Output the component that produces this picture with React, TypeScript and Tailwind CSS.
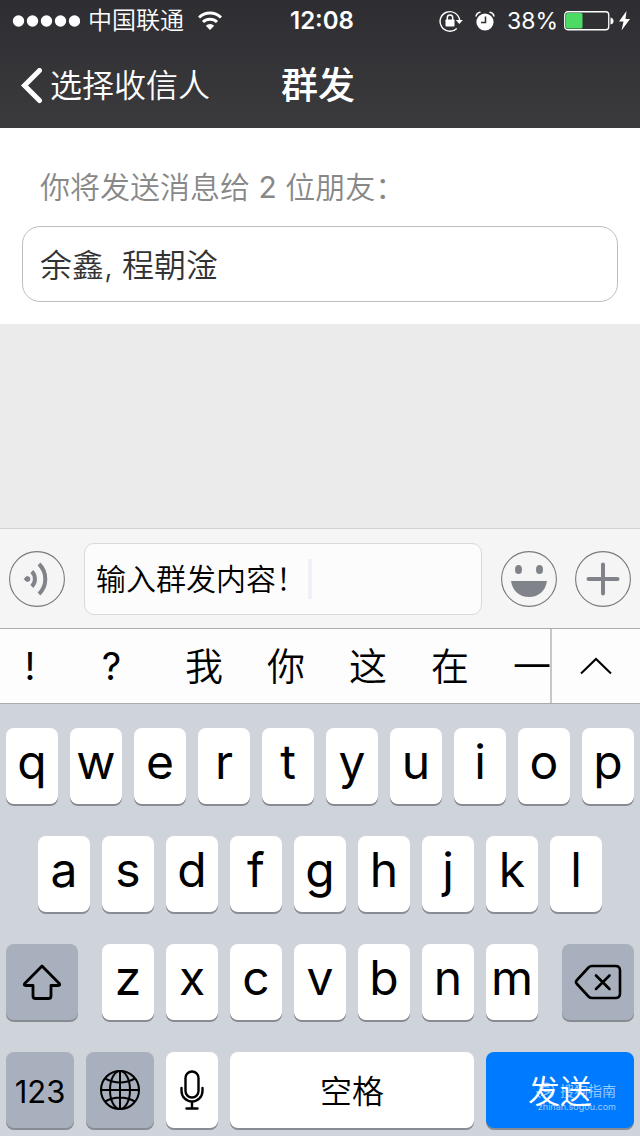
import type { ReactNode } from 'react';

function Carrier() {
  return (
    <div className="flex items-center">
      <svg className="h-3 w-17" viewBox="0 0 68 12" fill="currentColor" aria-hidden="true">
        <circle cx="6.500" cy="6" r="5.700" />
        <circle cx="20.500" cy="6" r="5.700" />
        <circle cx="34.500" cy="6" r="5.700" />
        <circle cx="48.500" cy="6" r="5.700" />
        <circle cx="62.500" cy="6" r="5.700" />
      </svg>
      <span className="ml-2 text-2xl leading-8 font-[350]">中国联通</span>
      <svg className="ml-3.5 h-5 w-6" viewBox="0 0 24 20" aria-hidden="true">
        <g fill="none" stroke="currentColor" strokeWidth="3">
          <path d="M1 6.500a15.800 15.800 0 0 1 22 0" />
          <path d="M5 11a10 10 0 0 1 14 0" />
        </g>
        <path d="M12 19 7.800 14.800a6 6 0 0 1 8.400 0z" fill="currentColor" />
      </svg>
    </div>
  );
}

function Power() {
  return (
    <div className="flex items-center justify-end">
      <svg className="h-6 w-6" viewBox="0 0 24 24" aria-hidden="true">
        <path d="M17.800 19.400A9.800 9.800 0 1 1 20.600 11" fill="none" stroke="currentColor" strokeWidth="1.400" />
        <path d="M16.800 11h7l-3.500 4z" fill="currentColor" />
        <rect x="6.500" y="10.500" width="9" height="7" rx="0.800" fill="currentColor" />
        <path d="M8.300 11V8.800a2.700 2.700 0 0 1 5.400 0V11" fill="none" stroke="currentColor" strokeWidth="1.500" />
      </svg>
      <svg className="ml-3 h-5 w-5" viewBox="0 0 20 20" aria-hidden="true">
        <circle cx="10" cy="11" r="8.600" fill="currentColor" />
        <path d="M1 5.500A5 5 0 0 1 5.500 1.200M19 5.500a5 5 0 0 0-4.500-4.300" fill="none" stroke="currentColor" strokeWidth="1.600" />
        <path d="M10.500 5.500V11.500H6" fill="none" stroke="#2f2e33" strokeWidth="1.500" />
      </svg>
      <span className="ml-3 text-[23px] leading-8">38%</span>
      <svg className="ml-1.5 h-5 w-[68px]" viewBox="0 0 68 20" aria-hidden="true">
        <rect x="0.750" y="0.750" width="44" height="18" rx="3" fill="none" stroke="currentColor" strokeWidth="1.300" />
        <rect x="2" y="2" width="16.500" height="15.500" rx="1.500" fill="#4cd964" />
        <path d="M46.500 6.500q3 .5 3 3.500t-3 3.500z" fill="currentColor" />
        <path d="M62.500 0 55 10.500h4.500L57.500 19.500 66 8h-4.500z" fill="currentColor" />
      </svg>
    </div>
  );
}

type KeyProps = { label: string; className: string; children: ReactNode };

function Key({ label, className, children }: KeyProps) {
  return (
    <button
      type="button"
      aria-label={label}
      className={`flex h-[76px] items-center justify-center rounded-lg shadow-[0_2px_0_#878b92] ${className}`}
    >
      {children}
    </button>
  );
}

function Letters({ keys }: { keys: string }) {
  return (
    <>
      {keys.split('').map((k) => (
        <Key key={k} label={k} className="min-w-0 flex-1 bg-white pb-2 text-5xl">
          {k}
        </Key>
      ))}
    </>
  );
}

function RoundButton({ label, children }: { label: string; children: ReactNode }) {
  return (
    <button type="button" aria-label={label} className="shrink-0 text-[#808389]">
      <svg className="h-14 w-14" viewBox="0 0 56 56" aria-hidden="true">
        <circle cx="28" cy="28" r="27.400" fill="none" stroke="#77797d" strokeWidth="1.100" />
        {children}
      </svg>
    </button>
  );
}

const candidates = ['我', '你', '这', '在', '一'];

export default function App() {
  return (
    <div className="flex min-h-screen flex-col bg-[#ebebeb] font-['Inter','Noto_Sans_CJK_SC',sans-serif] text-black">
      <header className="bg-linear-to-b from-[#2e2d32] to-[#3b3b3d] text-white">
        <div className="grid h-10 grid-cols-[1fr_auto_1fr] items-center pt-0.5 pr-2 pl-3">
          <Carrier />
          <time className="text-2xl leading-8 font-semibold">12:08</time>
          <Power />
        </div>
        <nav className="grid h-22 grid-cols-[1fr_auto_1fr] items-center pt-1 pr-6 pl-5">
          <a href="#recipients" className="flex items-center gap-2 text-[32px] leading-10 font-[350]">
            <svg className="h-9 w-[22px]" viewBox="0 0 22 36" fill="none" stroke="currentColor" strokeWidth="5" strokeLinecap="round" aria-hidden="true">
              <path d="M19.500 2.500 4.500 17.500l15 15" />
            </svg>
            选择收信人
          </a>
          <h1 className="text-[37px] leading-10 font-medium">群发</h1>
        </nav>
      </header>

      <section className="bg-white px-[22px] pt-9 pb-[22px]">
        <label htmlFor="recipients" className="block px-[18px] text-[30px] leading-[46px] font-[350] text-[#888]">
          你将发送消息给 <span className="font-normal">2</span> 位朋友：
        </label>
        <input
          id="recipients"
          readOnly
          defaultValue="余鑫, 程朝淦"
          className="mt-4 block h-[76px] w-full rounded-[18px] border border-[#bdbdbd] bg-white px-[17px] pb-0.5 text-[32px] font-[350] text-[#333] outline-none"
        />
      </section>

      <main className="min-h-51 flex-1" />

      <form className="flex h-25 items-center border-t border-[#d2d2d4] bg-[#f5f5f5] px-[9px]">
        <RoundButton label="语音">
          <circle cx="18.500" cy="28" r="2.800" fill="currentColor" />
          <path d="M14.500 28l4-3v6z" fill="currentColor" />
          <g fill="none" stroke="currentColor" strokeWidth="4">
            <path d="M22.800 20.500a10.500 10.500 0 0 1 0 15" />
            <path d="M30 13a21 21 0 0 1 0 30" />
          </g>
        </RoundButton>
        <div className="mr-[19px] ml-[19px] flex h-18 min-w-0 flex-1 items-center rounded-[10px] border border-[#d9d9db] bg-[#fcfcfc] pl-[11px]">
          <input
            aria-label="群发内容"
            defaultValue="输入群发内容！"
            className="h-14 max-w-full [field-sizing:content] bg-transparent pr-0.5 pb-1 text-[30px] font-[350] outline-none"
          />
          <span className="h-10 w-1 bg-[#f0f0f8]" />
        </div>
        <RoundButton label="表情">
          <ellipse cx="17.500" cy="18.500" rx="3.500" ry="4.600" fill="currentColor" />
          <ellipse cx="38.500" cy="18.500" rx="3.500" ry="4.600" fill="currentColor" />
          <path d="M10 30h36c-1.500 10-8.500 16-18 16s-16.500-6-18-16z" fill="currentColor" />
        </RoundButton>
        <span className="w-[18px] shrink-0" />
        <RoundButton label="更多">
          <path d="M28 13.500v29M13.500 28h29" fill="none" stroke="currentColor" strokeWidth="4" strokeLinecap="round" />
        </RoundButton>
      </form>

      <div className="flex h-19 border-y border-[#a9abaf] bg-[#fdfdfd] text-[38px]">
        <div className="flex min-w-0 flex-1 overflow-hidden">
          <button type="button" className="w-15 shrink-0">!</button>
          <button type="button" className="w-[103px] shrink-0">?</button>
          {candidates.map((c) => (
            <button key={c} type="button" className="w-[82px] shrink-0 font-[350]">
              {c}
            </button>
          ))}
        </div>
        <button type="button" aria-label="展开" className="flex w-[90px] shrink-0 items-center justify-center border-l-2 border-[#c5c7ca]">
          <svg className="h-5 w-8" viewBox="0 0 32 20" fill="none" stroke="currentColor" strokeWidth="2" aria-hidden="true">
            <path d="M1 17.500 16 3l15 14.500" />
          </svg>
        </button>
      </div>

      <div className="flex flex-col gap-8 bg-[#cfd3da] px-1.5 pt-6 pb-2">
        <div className="flex gap-3">
          <Letters keys="qwertyuiop" />
        </div>
        <div className="flex gap-3 px-8">
          <Letters keys="asdfghjkl" />
        </div>
        <div className="flex gap-6">
          <Key label="shift" className="w-18 bg-[#a9b0bd]">
            <svg className="h-9 w-10" viewBox="0 0 40 36" fill="none" stroke="currentColor" strokeWidth="2.800" strokeLinejoin="round" aria-hidden="true">
              <path d="M20 2 2.500 19.800q-.8 1.700 1 1.700H11V32q0 2.500 2.500 2.500h13q2.500 0 2.500-2.500V21.500h7.500q1.800 0 1-1.700z" />
            </svg>
          </Key>
          <div className="flex min-w-0 flex-1 gap-3">
            <Letters keys="zxcvbnm" />
          </div>
          <Key label="删除" className="w-18 bg-[#a9b0bd]">
            <svg className="h-9 w-12" viewBox="0 0 48 36" fill="none" stroke="currentColor" strokeWidth="2.600" strokeLinecap="round" strokeLinejoin="round" aria-hidden="true">
              <path d="M18 2h23.500q4.500 0 4.500 4.500v23q0 4.500-4.500 4.500H18q-2 0-3.500-1.500L3 20q-2-2 0-4L14.500 3.500Q16 2 18 2z" />
              <path d="m22 11.500 13.500 13.500M35.500 11.500 22 25" />
            </svg>
          </Key>
        </div>
        <div className="flex gap-3">
          <Key label="123" className="w-17 bg-[#a9b0bd] pt-1 text-[31px]">
            123
          </Key>
          <Key label="切换键盘" className="w-17 bg-[#a9b0bd]">
            <svg className="h-10 w-10" viewBox="0 0 40 40" fill="none" stroke="currentColor" strokeWidth="2" aria-hidden="true">
              <circle cx="20" cy="20" r="19" />
              <ellipse cx="20" cy="20" rx="10" ry="19" />
              <path d="M20 1v38M1 20h38M5 8.500q15 8 30 0M5 31.500q15-8 30 0" />
            </svg>
          </Key>
          <Key label="语音输入" className="w-13 bg-white">
            <svg className="h-10 w-6" viewBox="0 0 24 40" fill="none" stroke="currentColor" strokeWidth="2.400" strokeLinecap="round" aria-hidden="true">
              <rect x="5.500" y="1.500" width="13" height="26" rx="6.500" />
              <path d="M1.500 18v3a10.500 10.500 0 0 0 21 0v-3M12 32v6M6.500 38.500h11" />
            </svg>
          </Key>
          <Key label="空格" className="min-w-0 flex-1 bg-white pt-1 text-[32px] font-[350]">
            空格
          </Key>
          <div className="relative w-37">
            <Key label="发送" className="w-full bg-[#007aff] pt-1 text-[32px] font-[350] text-white">
              发送
            </Key>
            <div className="pointer-events-none absolute right-4.5 bottom-[15px] flex flex-col items-end text-white/60">
              <span className="flex items-center gap-1 text-sm leading-4">
                <svg className="h-5 w-5" viewBox="0 0 18 16" fill="none" stroke="currentColor" strokeWidth="1.200" aria-hidden="true">
                  <path d="M3 4.500A7 7 0 0 1 16 9a7 7 0 0 1-6 6M1 8a7 7 0 0 0 3 6" />
                  <path d="M12 4.500Q6 3 6 6t5 2.500T6.500 12H4.500" />
                </svg>
                搜狗指南
              </span>
              <span className="text-[9px] leading-3">zhinan.sogou.com</span>
            </div>
          </div>
        </div>
      </div>
    </div>
  );
}
